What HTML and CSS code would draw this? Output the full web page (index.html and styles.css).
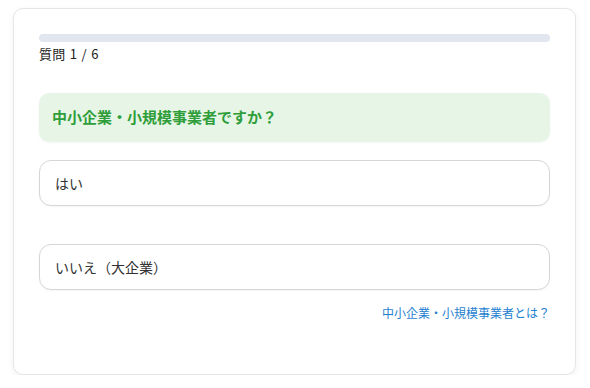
FILE: index.html
```html
<!DOCTYPE html>
<html lang="ja">
<head>
    <meta charset="UTF-8">
    <meta name="viewport" content="width=device-width, initial-scale=1.0">
    <title>診断</title>
    <link rel="stylesheet" href="styles.css">
</head>
<body>
    <div class="card">
        <div class="progress"><div class="progress-fill" style="width: 0%;"></div></div>
        <div class="progress-label">質問 1 / 6</div>

        <div class="question">中小企業・小規模事業者ですか？</div>

        <div class="options">
            <button class="option">はい</button>
            <button class="option">いいえ（大企業）</button>
        </div>

        <div class="help">
            <a href="#" class="help-link">中小企業・小規模事業者とは？</a>
        </div>
    </div>
</body>
</html>
```

FILE: styles.css
```css
body {
    font-family: "Noto Sans CJK JP", "Noto Sans", sans-serif;
    background: #fff;
    margin: 0;
    padding: 8px 14px 0 13px;
}

.card {
    background: white;
    border: 1px solid #e6e6e6;
    border-radius: 10px;
    padding: 25px 25px 0;
    height: 340px;
    box-shadow: 0 2px 6px rgba(0,0,0,0.06);
}

.progress {
    height: 8px;
    background: #e2e6ee;
    border-radius: 4px;
    overflow: hidden;
}

.progress-fill {
    height: 100%;
    background: #4caf50;
}

.progress-label {
    font-size: 13px;
    color: #222;
    margin-top: 3px;
    line-height: 18px;
    word-spacing: 1px;
    letter-spacing: 0.3px;
}

.question {
    margin-top: 30px;
    background: #e7f5e7;
    color: #2f9e3a;
    font-weight: bold;
    font-size: 15px;
    line-height: 20px;
    padding: 14px 13px 15px;
    border-radius: 10px;
    box-shadow: 0 1px 3px rgba(0,0,0,0.04);
}

.options {
    display: flex;
    flex-direction: column;
    gap: 38px;
    margin-top: 18px;
}

.option {
    font-family: inherit;
    text-align: left;
    background: white;
    border: 1px solid #d6d6d6;
    border-radius: 12px;
    padding: 0 15px;
    height: 46px;
    font-size: 14px;
    color: #333;
    box-shadow: 0 1px 2px rgba(0,0,0,0.04);
}

.help {
    text-align: right;
    margin-top: 9px;
}

.help-link {
    font-size: 12px;
    color: #1f7fd0;
    text-decoration: none;
}
```
